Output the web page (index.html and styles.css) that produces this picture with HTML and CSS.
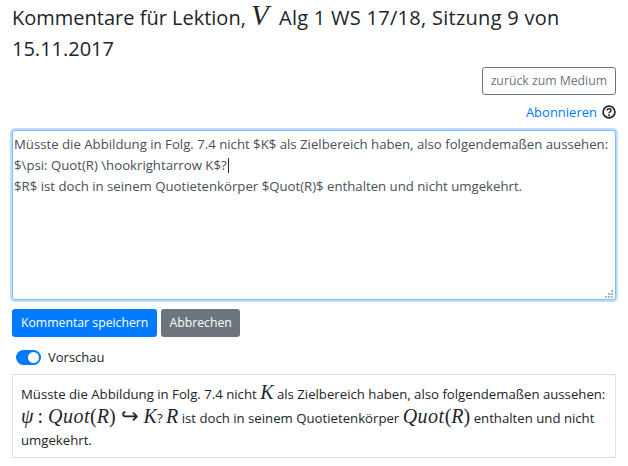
FILE: index.html
```html
<!DOCTYPE html>
<html lang="de">
<head>
    <meta charset="UTF-8">
    <meta name="viewport" content="width=device-width, initial-scale=1.0">
    <title>Kommentare für Lektion</title>
    <link rel="stylesheet" href="styles.css">
</head>
<body>

<div class="container">
    <h3 class="title">Kommentare für Lektion, <span class="math-title">V</span> <span class="title-rest">Alg 1 WS 17/18, Sitzung 9 von</span> 15.11.2017</h3>

    <div class="actions">
        <a class="btn btn-outline" href="#">zurück zum Medium</a>
    </div>

    <div class="subscribe">
        <a href="#">Abonnieren</a>
        <svg class="help" width="14" height="14" viewBox="0 0 14 14">
            <circle cx="7" cy="7" r="5.9" fill="none" stroke="#212529" stroke-width="1.7"/>
            <path d="M5 5.6c0-1.2.9-1.9 2-1.9s2 .7 2 1.7c0 1.500-2 1.400-2 2.900" fill="none" stroke="#212529" stroke-width="1.5"/>
            <circle cx="7" cy="10.200" r=".95" fill="#212529"/>
        </svg>
    </div>

    <div class="editor">
        <textarea class="comment" spellcheck="false">Müsste die Abbildung in Folg. 7.4 nicht $K$ als Zielbereich haben, also folgendemaßen aussehen:
$\psi: Quot(R) \hookrightarrow K$?
$R$ ist doch in seinem Quotietenkörper $Quot(R)$ enthalten und nicht umgekehrt.</textarea>
        <span class="caret"></span>
        <svg class="grip" width="9" height="9" viewBox="0 0 9 9" fill="#b4b4b4">
            <rect x="6" y="0" width="2" height="2"/>
            <rect x="3" y="3" width="2" height="2"/>
            <rect x="6" y="3" width="2" height="2"/>
            <rect x="0" y="6" width="2" height="2"/>
            <rect x="3" y="6" width="2" height="2"/>
            <rect x="6" y="6" width="2" height="2"/>
        </svg>
    </div>

    <div class="buttons">
        <button class="btn btn-primary">Kommentar speichern</button>
        <button class="btn btn-secondary">Abbrechen</button>
    </div>

    <div class="switch-row">
        <span class="switch"><span class="knob"></span></span>
        <span>Vorschau</span>
    </div>

    <div class="preview">
        Müsste die Abbildung in Folg. 7.4 nicht <span class="math">K</span> als Zielbereich haben, also folgendemaßen aussehen:
        <span class="math">ψ</span><span class="math-up op">:</span><span class="math quot">Quot</span><span class="math-up">(</span><span class="math">R</span><span class="math-up">)</span><span class="arrow">↪</span><span class="math">K</span>? <span class="math">R</span> ist doch in seinem Quotietenkörper <span class="math quot">Quot</span><span class="math-up">(</span><span class="math">R</span><span class="math-up">)</span> enthalten und nicht umgekehrt.
    </div>
</div>

</body>
</html>
```

FILE: styles.css
```css
body {
    font-family: 'Open Sans', 'Noto Sans', sans-serif;
    margin: 0;
    padding: 0;
    background-color: #fff;
    color: #212529;
}
.container {
    padding: 0 12px;
}
.title {
    margin: 2px 0 0;
    font-size: 20px;
    font-weight: 400;
    line-height: 31px;
}
.title-rest {
    letter-spacing: .28px;
}
.math-title {
    font-family: 'Liberation Serif', serif;
    font-style: italic;
    font-size: 29px;
    line-height: 20px;
    margin-right: 5px;
}
.math {
    font-family: 'Liberation Serif', serif;
    font-style: italic;
    font-size: 20px;
    line-height: 1;
}
.math-up {
    font-family: 'Liberation Serif', serif;
    font-size: 20px;
    line-height: 1;
}
.op {
    margin: 0 5px 0 4px;
}
.quot {
    letter-spacing: .5px;
}
.arrow {
    font-family: 'Liberation Serif', 'DejaVu Sans', serif;
    font-size: 21px;
    font-weight: 200;
    line-height: 1;
    margin: 0 5px;
}
.actions {
    display: flex;
    justify-content: flex-end;
    margin-top: 3px;
}
.btn {
    display: inline-block;
    padding: 0 8px;
    height: 28px;
    line-height: 26px;
    font-family: inherit;
    font-size: 12.25px;
    border: 1px solid transparent;
    border-radius: 3px;
    box-sizing: border-box;
    text-decoration: none;
}
.btn-outline {
    color: #6c757d;
    border-color: #6c757d;
}
.subscribe {
    display: flex;
    justify-content: flex-end;
    align-items: center;
    gap: 5px;
    margin-top: 7px;
    font-size: 13px;
    line-height: 20px;
}
.subscribe a {
    color: #007bff;
    text-decoration: none;
}
.editor {
    position: relative;
    margin-top: 8px;
}
.comment {
    display: block;
    width: 100%;
    height: 170px;
    padding: 3px 0 0 1px;
    font-family: inherit;
    font-size: 13.2px;
    line-height: 21px;
    color: #495057;
    border: 1px solid #80bdff;
    border-radius: 3px;
    box-shadow: 0 0 0 2px #bfdeff;
    box-sizing: border-box;
    outline: none;
    resize: none;
    overflow: hidden;
}
.caret {
    position: absolute;
    left: 216px;
    top: 28px;
    width: 1px;
    height: 15px;
    background-color: #212529;
}
.grip {
    position: absolute;
    right: 2px;
    bottom: 1px;
}
.buttons {
    display: flex;
    gap: 4px;
    margin-top: 9px;
}
.btn-primary {
    color: #fff;
    background-color: #007bff;
}
.btn-secondary {
    padding: 0 7px;
    color: #fff;
    background-color: #6c757d;
}
.switch-row {
    display: flex;
    align-items: center;
    gap: 7px;
    margin: 10px 0 0 4px;
    font-size: 13px;
    line-height: 20px;
}
.switch {
    display: flex;
    justify-content: flex-end;
    align-items: center;
    width: 25px;
    height: 15px;
    padding: 2px;
    background-color: #007bff;
    border-radius: 8px;
    box-sizing: border-box;
}
.knob {
    width: 11px;
    height: 11px;
    background-color: #fff;
    border-radius: 50%;
}
.preview {
    margin-top: 7px;
    padding: 7px 8px 5px;
    font-size: 13.2px;
    line-height: 22.5px;
    border: 1px solid #dee2e6;
}
```
